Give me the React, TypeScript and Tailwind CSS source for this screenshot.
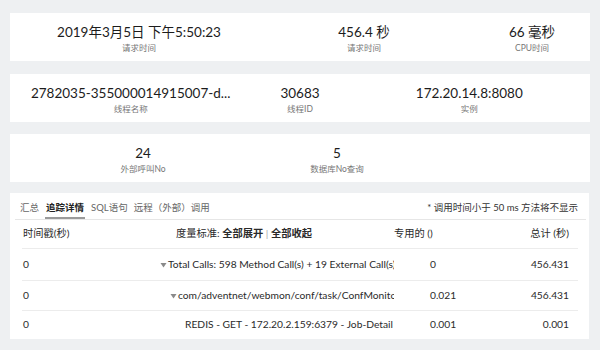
import React from "react";

const font = "font-['Lato','Noto_Sans_CJK_SC',sans-serif]";

function Stat({ value, label, extra = "" }: { value: string; label: string; extra?: string }) {
  return (
    <div className={`flex flex-col items-center pt-[11px] ${extra}`}>
      <div className="text-[13.5px] leading-[16px] text-[#1c1c1c] whitespace-nowrap">{value}</div>
      <div className="mt-[3px] text-[8.5px] leading-[10px] text-[#777] whitespace-nowrap">{label}</div>
    </div>
  );
}

function Tri() {
  return (
    <svg width="7" height="6" viewBox="0 0 7 6" className="inline-block mr-[1px] mb-[1px]">
      <path d="M0.5 1 L6.5 1 L3.5 5.5 Z" fill="#8a8a8a" />
    </svg>
  );
}

const rows = [
  { ts: "0", pl: "pl-[10px]", tri: true, name: "Total Calls: 598 Method Call(s) + 19 External Call(s)", own: "0", total: "456.431", h: "h-[32px] border-b" },
  { ts: "0", pl: "pl-[20px]", tri: true, name: "com/adventnet/webmon/conf/task/ConfMonitorTask.run", own: "0.021", total: "456.431", h: "h-[30px] border-b" },
  { ts: "0", pl: "pl-[35px]", tri: false, name: "REDIS - GET - 172.20.2.159:6379 - Job-Detail", own: "0.001", total: "0.001", h: "h-[28px]" },
];

export default function App() {
  return (
    <div className={`w-[600px] h-[350px] bg-[#eef0f2] pt-[13px] px-[10px] overflow-hidden ${font}`}>
      <div className="h-[48px] bg-white grid grid-cols-[258px_192px_1fr]">
        <Stat value="2019年3月5日 下午5:50:23" label="请求时间" />
        <Stat value="456.4 秒" label="请求时间" />
        <Stat value="66 毫秒" label="CPU时间" extra="pl-[14px]" />
      </div>
      <div className="mt-[13px] h-[48px] bg-white grid grid-cols-3 px-[36px]">
        <Stat value="2782035-355000014915007-d..." label="线程名称" />
        <Stat value="30683" label="线程ID" />
        <Stat value="172.20.14.8:8080" label="实例" />
      </div>
      <div className="mt-[12px] h-[48px] bg-white grid grid-cols-[194px_194px] pl-[36px]">
        <Stat value="24" label="外部呼叫No" />
        <Stat value="5" label="数据库No查询" />
      </div>
      <div className="mt-[11px] h-[146px] w-[579px] bg-white">
        <div className="ml-[5px] mr-[3px] h-[27px] border-b border-[#e6e6e6] flex items-start justify-between">
          <div className="flex gap-[6px] pl-[5px] text-[9.5px] leading-[12px] text-[#666]">
            <div className="pt-[9px]">汇总</div>
            <div className="pt-[9px] h-[26px] font-bold text-[#222] border-b-2 border-[#9a9a9a] px-[1px]">追踪详情</div>
            <div className="pt-[9px]">SQL语句</div>
            <div className="pt-[9px]">远程（外部）调用</div>
          </div>
          <div className="pt-[9px] pr-[8px] text-[9.5px] leading-[12px] text-[#333]">* 调用时间小于 50 ms 方法将不显示</div>
        </div>
        <div className="ml-[12px] mr-[11px] text-[10.25px] text-[#2a2a2a]">
          <div className="h-[29px] border-b border-[#ececec] grid grid-cols-[128px_244px_86px_98px] items-center">
            <div className="pl-[1px]">时间戳(秒)</div>
            <div className="pl-[26px] whitespace-nowrap">
              度量标准: <span className="font-bold">全部展开</span> <span className="text-[#aaa]">|</span> <span className="font-bold">全部收起</span>
            </div>
            <div>专用的 ()</div>
            <div className="text-right pr-[9px]">总计 (秒)</div>
          </div>
          {rows.map((r, i) => (
            <div key={i} className={`${r.h} border-[#ececec] grid grid-cols-[128px_244px_86px_98px] items-center`}>
              <div className="pl-[1px]">{r.ts}</div>
              <div className={`${r.pl} whitespace-nowrap overflow-hidden`}>
                {r.tri && <Tri />}
                {r.name}
              </div>
              <div className="pl-[36px]">{r.own}</div>
              <div className="text-right pr-[9px]">{r.total}</div>
            </div>
          ))}
        </div>
      </div>
    </div>
  );
}
